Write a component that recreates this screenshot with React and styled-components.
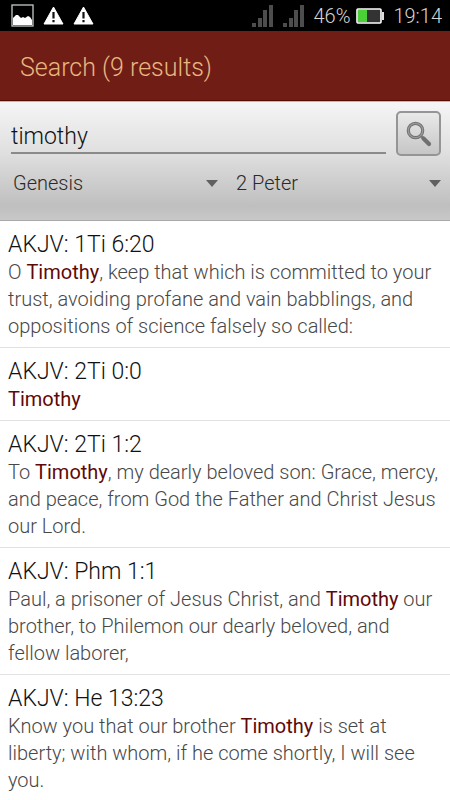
// Libraries
import React from 'react';
import styled, { createGlobalStyle } from 'styled-components';

// Stylings
const GlobalStyle = createGlobalStyle`
* {
  box-sizing: border-box;
}

body {
  margin: 0;
  background-color: #fff;
  font-family: Roboto, "Liberation Sans", sans-serif;
  font-weight: 300;
}
`
const Screen = styled.div`
height: 100vh;
overflow: hidden;
`
const StatusBar = styled.div`
display: flex;
align-items: center;
justify-content: space-between;
height: 31px;
padding: 0 8px 0 11px;
background-color: #000;
color: #d6d6d6;
font-size: 20px;
`
const StatusGroup = styled.div`
display: flex;
align-items: center;
gap: ${props => props.$gap};

svg {
  display: block;
}
`
const Header = styled.header`
display: flex;
align-items: center;
height: 70px;
padding: 4px 20px 0;
background-color: #6f1d15;
border-bottom: 1px solid #5a0a05;
`
const Title = styled.h1`
margin: 0;
color: #e8b780;
font-size: 25px;
font-weight: 300;
`
const SearchForm = styled.form`
height: 120px;
padding: 9px 9px 0 11px;
background: linear-gradient(#f5f5f5, #e0e0e0 42%, #bfbfbf 88%, #c8c8c8);
border-top: 1px solid #c4b4b4;
border-bottom: 1px solid #a8a8a8;
`
const SearchRow = styled.div`
display: flex;
align-items: flex-start;
gap: 10px;
`
const SearchInput = styled.input`
flex: 1;
min-width: 0;
height: 43px;
margin: 0;
padding: 10px 0 0;
border: none;
border-bottom: 2px solid #8a8a8a;
border-radius: 0;
outline: none;
background: none;
color: #111;
font-family: inherit;
font-size: 23px;
font-weight: 300;
`
const SearchButton = styled.button`
display: flex;
align-items: center;
justify-content: center;
width: 45px;
height: 45px;
padding: 0;
border: 2px solid #959595;
border-radius: 5px;
background: linear-gradient(#e9e9e9, #c6c6c6);
cursor: pointer;
`
const BookRow = styled.div`
display: grid;
grid-template-columns: 1fr 1fr;
gap: 18px;
padding: 13px 0 0 2px;
`
const Picker = styled.div`
display: flex;
align-items: center;

svg {
  flex: none;
  pointer-events: none;
}
`
const Select = styled.select`
appearance: none;
flex: 1;
min-width: 0;
height: 28px;
padding: 0;
border: none;
outline: none;
background: none;
color: #2a2a2a;
font-family: inherit;
font-size: 20px;
font-weight: 300;
`
const Results = styled.ul`
margin: 0;
padding: 0;
list-style: none;
`
const Result = styled.li`
padding: 10px 8px 7px;
border-bottom: 1px solid #e2e2e2;
`
const Reference = styled.h2`
margin: 0;
color: #111;
font-size: 23px;
font-weight: 300;
line-height: 28px;
`
const Verse = styled.p`
margin: 0;
color: #484848;
font-size: 20px;
line-height: 27px;
`
const Match = styled.b`
color: #5f0808;
font-weight: 400;
`

const results = [
  { ref: 'AKJV: 1Ti 6:20', before: 'O ', after: ', keep that which is committed to your trust, avoiding profane and vain babblings, and oppositions of science falsely so called:' },
  { ref: 'AKJV: 2Ti 0:0', before: '', after: '' },
  { ref: 'AKJV: 2Ti 1:2', before: 'To ', after: ', my dearly beloved son: Grace, mercy, and peace, from God the Father and Christ Jesus our Lord.' },
  { ref: 'AKJV: Phm 1:1', before: 'Paul, a prisoner of Jesus Christ, and ', after: ' our brother, to Philemon our dearly beloved, and fellow laborer,' },
  { ref: 'AKJV: He 13:23', before: 'Know you that our brother ', after: ' is set at liberty; with whom, if he come shortly, I will see you.' },
];

// Icons
const PictureIcon = () => (
  <svg width="23" height="23" viewBox="0 0 23 23">
    <rect x="1" y="1" width="21" height="21" fill="#000" stroke="#c4cac8" strokeWidth="1.3" />
    <path d="M2 14L5 11L7 11L10 14L12 13L14 14L17 12L19 13L21 16V21H2Z" fill="#fff" />
  </svg>
)

const WarningIcon = () => (
  <svg width="21" height="19" viewBox="0 0 21 19">
    <path d="M10.5 1L20 18H1Z" fill="#fff" stroke="#fff" strokeWidth="1" strokeLinejoin="round" />
    <path d="M9.4 6H11.6V12.5H9.4ZM9.4 14H11.6V16.2H9.4Z" fill="#111" />
  </svg>
)

const SignalIcon = () => (
  <svg width="21" height="22" viewBox="0 0 21 22" fill="#4d4d4d">
    <rect x="0" y="18" width="4" height="4" />
    <rect x="6" y="13" width="4" height="9" />
    <rect x="11" y="5" width="4" height="17" />
    <rect x="17" y="0" width="4" height="22" />
  </svg>
)

const BatteryIcon = () => (
  <svg width="28" height="16" viewBox="0 0 28 16">
    <rect x="1" y="1" width="24" height="14" rx="1" fill="#333" stroke="#fff" strokeWidth="1.6" />
    <rect x="26" y="4" width="2" height="8" fill="#ddd" />
    <rect x="2" y="2" width="9" height="12" fill="#4bd137" />
  </svg>
)

const SearchIcon = () => (
  <svg width="26" height="26" viewBox="0 0 26 26" fill="none">
    <path d="M14.5 14.5L18 18" stroke="#858585" strokeWidth="2.6" />
    <path d="M17.5 17.5L23 23" stroke="#707070" strokeWidth="4.2" strokeLinecap="round" />
    <circle cx="9.5" cy="9.5" r="7.2" stroke="#707070" strokeWidth="3.2" />
    <circle cx="9.5" cy="9.5" r="7.2" stroke="#9a9a9a" strokeWidth="1.3" />
  </svg>
)

const Arrow = () => (
  <svg width="12" height="7" viewBox="0 0 12 7">
    <path d="M0 0H12L6 7Z" fill="#606060" />
  </svg>
)

const App = () => {
  return (
    <Screen>
      <GlobalStyle />
      <StatusBar>
        <StatusGroup $gap="9px">
          <PictureIcon />
          <WarningIcon />
          <WarningIcon />
        </StatusGroup>
        <StatusGroup $gap="9px">
          <StatusGroup $gap="10px">
            <SignalIcon />
            <SignalIcon />
          </StatusGroup>
          <StatusGroup $gap="6px">
            <span>46%</span>
            <BatteryIcon />
          </StatusGroup>
          <span>19:14</span>
        </StatusGroup>
      </StatusBar>

      <Header>
        <Title>Search (9 results)</Title>
      </Header>

      <SearchForm onSubmit={e => e.preventDefault()}>
        <SearchRow>
          <SearchInput type="text" aria-label="Search text" defaultValue="timothy" />
          <SearchButton type="submit" aria-label="Search">
            <SearchIcon />
          </SearchButton>
        </SearchRow>
        <BookRow>
          <Picker>
            <Select aria-label="From book" defaultValue="Genesis">
              <option>Genesis</option>
            </Select>
            <Arrow />
          </Picker>
          <Picker>
            <Select aria-label="To book" defaultValue="2 Peter">
              <option>2 Peter</option>
            </Select>
            <Arrow />
          </Picker>
        </BookRow>
      </SearchForm>

      <Results>
        {results.map(result => (
          <Result key={result.ref}>
            <Reference>{result.ref}</Reference>
            <Verse>
              {result.before}
              <Match>Timothy</Match>
              {result.after}
            </Verse>
          </Result>
        ))}
      </Results>
    </Screen>
  )
}

export default App;
